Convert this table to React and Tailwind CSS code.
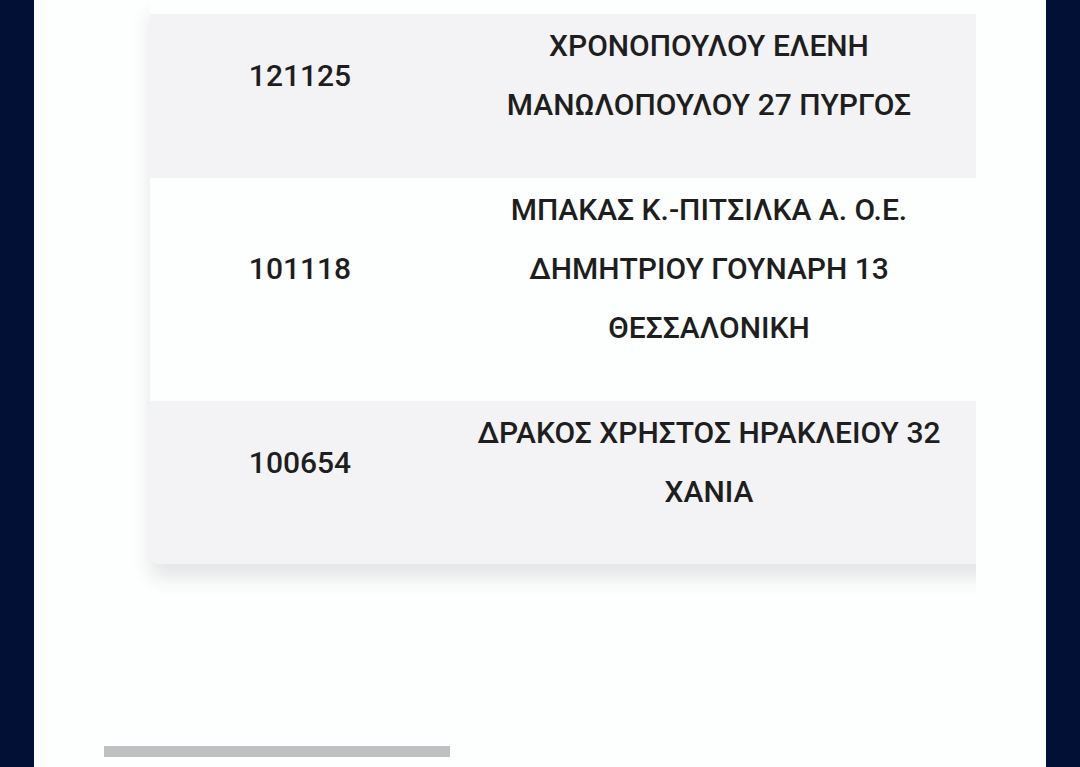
export default function App() {
  const rows = [
    { id: "121125", lines: "ΧΡΟΝΟΠΟΥΛΟΥ ΕΛΕΝΗ ΜΑΝΩΛΟΠΟΥΛΟΥ 27 ΠΥΡΓΟΣ", bg: "bg-[#f3f3f6]", pb: "pb-[44px]" },
    { id: "101118", lines: "ΜΠΑΚΑΣ Κ.-ΠΙΤΣΙΛΚΑ Α. Ο.Ε. ΔΗΜΗΤΡΙΟΥ ΓΟΥΝΑΡΗ 13 ΘΕΣΣΑΛΟΝΙΚΗ", bg: "bg-[#fdfefe]", pb: "pb-[44px]" },
    { id: "100654", lines: "ΔΡΑΚΟΣ ΧΡΗΣΤΟΣ ΗΡΑΚΛΕΙΟΥ 32 ΧΑΝΙΑ", bg: "bg-[#f3f3f6]", pb: "pb-[43px]" },
  ];
  return (
    <div className="flex h-[767px] w-[1080px] overflow-hidden bg-[#011034]" style={{ fontFamily: "Roboto, 'Noto Sans', sans-serif" }}>
      <div className="w-[34px] shrink-0 bg-[#011034]" />
      <div className="flex w-[1012px] shrink-0 flex-col bg-[#fdfefe]">
        <div className="ml-[70px] flex h-[757px] w-[872px] flex-col overflow-hidden">
          <div className="flex-1 overflow-hidden pl-[46px]">
            <div className="w-[2150px] overflow-hidden rounded-b-[10px] bg-[#fdfefe] shadow-[0_14px_20px_rgba(0,0,0,0.1)]">
              <div className="h-[14px] bg-[#fdfefe]" />
              {rows.map((r) => (
                <div key={r.id} className={`flex items-center pt-[2px] ${r.pb} ${r.bg}`}>
                  <div className="w-[300px] shrink-0 text-center text-[30px] font-medium leading-[59px] text-[#1e1e1e]">
                    {r.id}
                  </div>
                  <div className="w-[518px] shrink-0 px-[16px] text-center text-[30px] font-medium leading-[59px] text-[#1e1e1e]">
                    {r.lines}
                  </div>
                  <div className="flex-1" />
                </div>
              ))}
            </div>
          </div>
          <div className="h-[11px] w-[346px] shrink-0 bg-[#bfc0c2]" />
        </div>
      </div>
      <div className="w-[34px] shrink-0 bg-[#011034]" />
    </div>
  );
}
